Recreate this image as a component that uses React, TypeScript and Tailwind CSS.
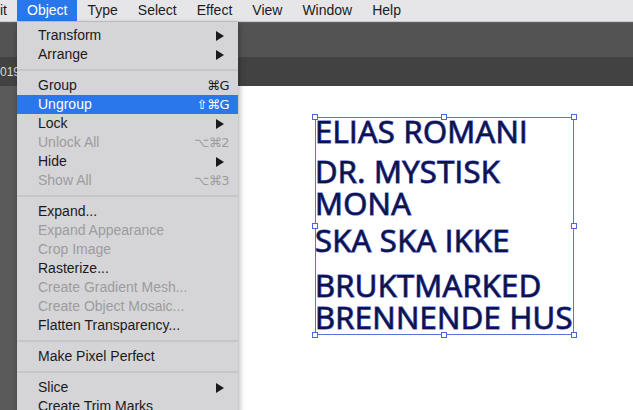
// Illustrator "Object" menu open over an artboard
type Item =
  | { sep: true }
  | { label: string; shortcut?: string; sub?: boolean; disabled?: boolean; active?: boolean };

const items: Item[] = [
  { label: 'Transform', sub: true },
  { label: 'Arrange', sub: true },
  { sep: true },
  { label: 'Group', shortcut: '⌘G' },
  { label: 'Ungroup', shortcut: '⇧⌘G', active: true },
  { label: 'Lock', sub: true },
  { label: 'Unlock All', shortcut: '⌥⌘2', disabled: true },
  { label: 'Hide', sub: true },
  { label: 'Show All', shortcut: '⌥⌘3', disabled: true },
  { sep: true },
  { label: 'Expand...' },
  { label: 'Expand Appearance', disabled: true },
  { label: 'Crop Image', disabled: true },
  { label: 'Rasterize...' },
  { label: 'Create Gradient Mesh...', disabled: true },
  { label: 'Create Object Mosaic...', disabled: true },
  { label: 'Flatten Transparency...' },
  { sep: true },
  { label: 'Make Pixel Perfect' },
  { sep: true },
  { label: 'Slice', sub: true },
  { label: 'Create Trim Marks' },
];

const menus = ['Object', 'Type', 'Select', 'Effect', 'View', 'Window', 'Help'];

const lines = [
  { text: 'ELIAS ROMANI', mt: 'mt-0' },
  { text: 'DR. MYSTISK', mt: 'mt-[8px]' },
  { text: 'MONA', mt: 'mt-0' },
  { text: 'SKA SKA IKKE', mt: 'mt-[5px]' },
  { text: 'BRUKTMARKED', mt: 'mt-[13px]' },
  { text: 'BRENNENDE HUS', mt: 'mt-0' },
];

function Handle({ className }: { className: string }) {
  return <div className={`absolute w-[6px] h-[6px] bg-white border border-[#4a68dc] ${className}`} />;
}

function Arrow() {
  return (
    <svg width="8" height="10" viewBox="0 0 8 10">
      <path d="M0 0 L8 5 L0 10 Z" fill="#1a1a1a" />
    </svg>
  );
}

export default function App() {
  return (
    <div className="relative w-[633px] h-[410px] overflow-hidden bg-white font-['Liberation_Sans','DejaVu_Sans',sans-serif] flex flex-col">
      {/* menu bar */}
      <div className="h-[22px] bg-[#e6e6e8] flex items-center text-[14px] text-[#1c1c1c] border-b border-[#c9c9cb]">
        <span className="pr-[10px]">it</span>
        {menus.map((m) => (
          <span
            key={m}
            className={`h-full flex items-center px-[10px] ${m === 'Object' ? 'bg-[#2a77ec] text-white' : ''}`}
          >
            {m}
          </span>
        ))}
      </div>

      {/* control bar */}
      <div className="h-[35px] bg-[#535353] border-t border-[#5e5e5e]" />
      {/* tab bar */}
      <div className="h-[29px] bg-[#424242] flex items-center">
        <span className="text-[12px] text-[#d8d8d8]">019</span>
      </div>

      {/* workspace */}
      <div className="flex-1 flex">
        <div className="w-[60px] bg-[#5a5a5a]" />
        <div className="flex-1 bg-white pl-[255px] pt-[31px]">
          <div className="relative w-[259px] h-[218px] border border-[#5a74dc]">
            <Handle className="-left-[4px] -top-[4px]" />
            <Handle className="left-[125px] -top-[4px]" />
            <Handle className="-right-[4px] -top-[4px]" />
            <Handle className="-left-[4px] top-[105px]" />
            <Handle className="-right-[4px] top-[105px]" />
            <Handle className="-left-[4px] -bottom-[4px]" />
            <Handle className="left-[125px] -bottom-[4px]" />
            <Handle className="-right-[4px] -bottom-[4px]" />
            <div className="-mt-[3px] -ml-[1px] font-['Open_Sans',sans-serif] text-[31px] tracking-[0.3px] text-[#12123f] [-webkit-text-stroke:1.2px_#3f58d6] [paint-order:stroke_fill] whitespace-nowrap">
              {lines.map((l) => (
                <div key={l.text} className={`leading-[32px] h-[32px] ${l.mt}`}>
                  {l.text}
                </div>
              ))}
            </div>
          </div>
        </div>
      </div>

      {/* dropdown */}
      <div className="absolute left-[17px] top-[22px] w-[221px] h-[400px] bg-[#d5d5d7] pt-[4px] shadow-[1px_2px_6px_rgba(0,0,0,0.35)] text-[14px]">
        {items.map((it, i) =>
          'sep' in it ? (
            <div key={i} className="h-[12px] flex items-center">
              <div className="w-full h-[2px] bg-[#c6c6c8]" />
            </div>
          ) : (
            <div
              key={i}
              className={`h-[19px] flex items-center justify-between pl-[21px] pr-[9px] ${
                it.active ? 'bg-[#2a77ec] text-white' : it.disabled ? 'text-[#9c9c9e]' : 'text-[#1a1a1a]'
              }`}
            >
              <span>{it.label}</span>
              {it.shortcut && <span className="font-['DejaVu_Sans',sans-serif] text-[13px] tracking-[-0.5px]">{it.shortcut}</span>}
              {it.sub && (
                <span className="pr-[5px]">
                  <Arrow />
                </span>
              )}
            </div>
          ),
        )}
      </div>
    </div>
  );
}
